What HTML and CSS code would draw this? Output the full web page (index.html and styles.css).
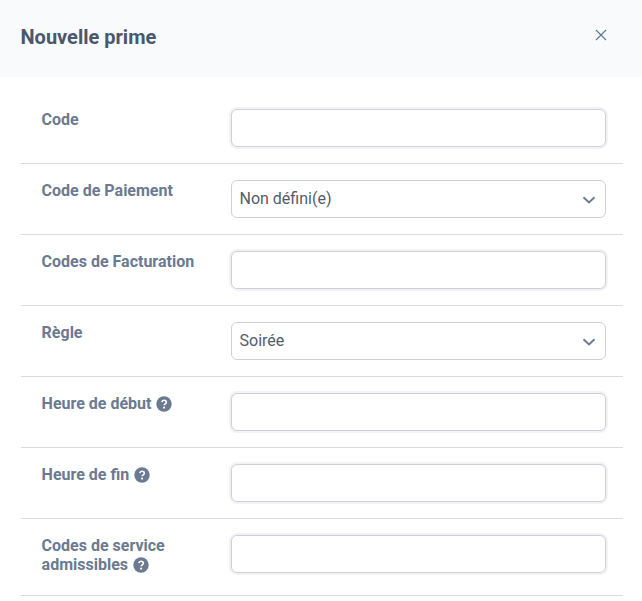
FILE: index.html
```html
<!DOCTYPE html>
<html lang="fr">
<head>
    <meta charset="UTF-8">
    <meta name="viewport" content="width=device-width, initial-scale=1.0">
    <title>Nouvelle prime</title>
    <link rel="stylesheet" href="styles.css">
</head>
<body>
    <svg class="defs" width="0" height="0">
        <symbol id="help" viewBox="0 0 16 16">
            <circle cx="8" cy="8" r="7.7" fill="currentColor"/>
            <path d="M5.8 6.2C6 4.9 6.8 4.3 8 4.3c1.300 0 2.300.8 2.300 1.900 0 1.600-2.100 1.600-2.100 3.100" fill="none" stroke="#fff" stroke-width="1.600"/>
            <circle cx="8.100" cy="11.600" r="1.100" fill="#fff"/>
        </symbol>
    </svg>

    <header class="modal-header">
        <h1>Nouvelle prime</h1>
        <button type="button" class="close" aria-label="Fermer">
            <svg width="12" height="12" viewBox="0 0 12 12">
                <path d="M1 1l10 10M11 1L1 11" fill="none" stroke="currentColor" stroke-width="1.1"/>
            </svg>
        </button>
    </header>

    <form class="modal-body">
        <div class="row">
            <label for="code">Code</label>
            <input type="text" id="code">
        </div>
        <div class="row">
            <label for="paiement">Code de Paiement</label>
            <div class="select">
                <select id="paiement">
                    <option>Non défini(e)</option>
                </select>
                <svg class="chevron" width="14" height="8" viewBox="0 0 14 8"><path d="M1.500 1.200L7 6.500l5.500-5.300"/></svg>
            </div>
        </div>
        <div class="row">
            <label for="facturation">Codes de Facturation</label>
            <input type="text" id="facturation">
        </div>
        <div class="row">
            <label for="regle">Règle</label>
            <div class="select">
                <select id="regle">
                    <option>Soirée</option>
                </select>
                <svg class="chevron" width="14" height="8" viewBox="0 0 14 8"><path d="M1.500 1.200L7 6.500l5.500-5.300"/></svg>
            </div>
        </div>
        <div class="row">
            <label for="debut">Heure de début <svg class="help"><use href="#help"/></svg></label>
            <input type="text" id="debut">
        </div>
        <div class="row">
            <label for="fin">Heure de fin <svg class="help"><use href="#help"/></svg></label>
            <input type="text" id="fin">
        </div>
        <div class="row">
            <label for="service">Codes de service admissibles <svg class="help"><use href="#help"/></svg></label>
            <input type="text" id="service">
        </div>
    </form>
</body>
</html>
```

FILE: styles.css
```css
* {
    box-sizing: border-box;
}

body {
    margin: 0;
    font-family: Roboto, sans-serif;
    font-size: 16px;
    color: #4a5568;
    background-color: #fff;
}

.defs {
    display: none;
}

.modal-header {
    display: flex;
    justify-content: space-between;
    align-items: center;
    height: 77px;
    padding: 0 35px 4px 20.5px;
    background-color: #f9fafc;
}

h1 {
    margin: 0;
    font-size: 20px;
    font-weight: 700;
    line-height: 24px;
    color: #4b586b;
}

.close {
    display: flex;
    margin-top: -4px;
    padding: 0;
    border: none;
    background: none;
    color: #5b7590;
    cursor: pointer;
}

.modal-body {
    padding: 16px 19px 0 21px;
}

.row {
    display: grid;
    grid-template-columns: 170px 375px;
    column-gap: 20px;
    align-items: start;
    padding: 16px 17px 16px 20px;
    border-bottom: 1px solid #dcdcdf;
}

label {
    padding: 1px 0 5px 0.6px;
    font-weight: 700;
    line-height: 19px;
    color: #6b7a90;
}

.help {
    width: 16px;
    height: 16px;
    margin: -2px 0 -2px 0.5px;
    vertical-align: -1px;
}

input,
select {
    display: block;
    width: 100%;
    height: 38px;
    padding: 0 7.5px;
    border: 1px solid #cdd0dc;
    border-radius: 6px;
    background-color: #fff;
    font: inherit;
    color: #525c6b;
}

input {
    box-shadow: 0 0 0 2px #f3f3f6;
}

select {
    appearance: none;
    padding-bottom: 2px;
}

.select {
    position: relative;
}

.chevron {
    position: absolute;
    top: 15.5px;
    right: 10.5px;
    fill: none;
    stroke: #6b7a90;
    stroke-width: 1.9;
    pointer-events: none;
}
```
